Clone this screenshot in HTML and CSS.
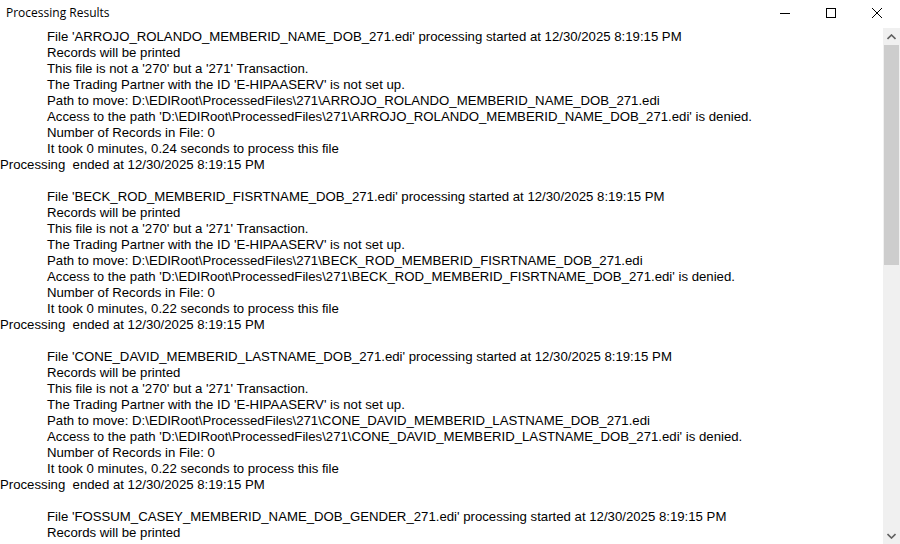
FILE: index.html
```html
<!DOCTYPE html>
<html lang="en">
<head>
    <meta charset="UTF-8">
    <title>Processing Results</title>
    <link rel="stylesheet" href="styles.css">
</head>
<body>

    <div class="window">
        <!-- Title bar -->
        <div class="titlebar">
            <span class="title">Processing Results</span>
            <div class="caption-buttons">
                <span class="cap-btn">
                    <svg width="10" height="10" viewBox="0 0 10 10"><path d="M0 5.5h10" stroke="#000" stroke-width="1"/></svg>
                </span>
                <span class="cap-btn">
                    <svg width="10" height="10" viewBox="0 0 10 10"><rect x="0.5" y="0.5" width="9" height="9" fill="none" stroke="#000" stroke-width="1"/></svg>
                </span>
                <span class="cap-btn">
                    <svg width="10" height="10" viewBox="0 0 10 10"><path d="M0 0L10 10M10 0L0 10" stroke="#000" stroke-width="1"/></svg>
                </span>
            </div>
        </div>

        <!-- Results text box -->
        <div class="content">
            <div class="results" id="results"></div>
            <div class="scrollbar">
                <span class="arrow">
                    <svg width="9" height="6" viewBox="0 0 9 6"><path d="M0.5 5L4.5 1L8.5 5" fill="none" stroke="#606060" stroke-width="1.6"/></svg>
                </span>
                <div class="track">
                    <div class="thumb"></div>
                </div>
                <span class="arrow">
                    <svg width="9" height="6" viewBox="0 0 9 6"><path d="M0.5 1L4.5 5L8.5 1" fill="none" stroke="#606060" stroke-width="1.6"/></svg>
                </span>
            </div>
        </div>
    </div>

    <script>
        (function() {
            const files = [
                { name: 'ARROJO_ROLANDO_MEMBERID_NAME_DOB_271.edi', secs: '0.24' },
                { name: 'BECK_ROD_MEMBERID_FISRTNAME_DOB_271.edi', secs: '0.22' },
                { name: 'CONE_DAVID_MEMBERID_LASTNAME_DOB_271.edi', secs: '0.22' },
                { name: 'FOSSUM_CASEY_MEMBERID_NAME_DOB_GENDER_271.edi', secs: '0.22' }
            ];
            const stamp = '12/30/2025 8:19:15 PM';
            const box = document.getElementById('results');

            function addLine(text, indented) {
                const line = document.createElement('div');
                line.className = indented ? 'line indent' : 'line';
                line.textContent = text || '\u00a0';
                box.appendChild(line);
            }

            files.forEach(f => {
                addLine("File '" + f.name + "' processing started at " + stamp, true);
                addLine('Records will be printed', true);
                addLine("This file is not a '270' but a '271' Transaction.", true);
                addLine("The Trading Partner with the ID 'E-HIPAASERV' is not set up.", true);
                addLine('Path to move: D:\\EDIRoot\\ProcessedFiles\\271\\' + f.name, true);
                addLine("Access to the path 'D:\\EDIRoot\\ProcessedFiles\\271\\" + f.name + "' is denied.", true);
                addLine('Number of Records in File: 0', true);
                addLine('It took 0 minutes, ' + f.secs + ' seconds to process this file', true);
                addLine('Processing  ended at ' + stamp, false);
                addLine('', false);
            });
        })();
    </script>
</body>
</html>
```

FILE: styles.css
```css
/* Reset */
* {
    margin: 0;
    padding: 0;
    box-sizing: border-box;
}

body {
    width: 900px;
    height: 544px;
    overflow: hidden;
    background-color: #fff;
}

.window {
    width: 900px;
    height: 544px;
    display: flex;
    flex-direction: column;
    background-color: #fff;
}

/* Title bar */
.titlebar {
    height: 28px;
    flex-shrink: 0;
    display: flex;
    align-items: flex-start;
    justify-content: space-between;
}

.title {
    font-family: "Open Sans", "Noto Sans", sans-serif;
    font-size: 12px;
    color: #000;
    padding: 4px 0 0 6px;
}

.caption-buttons {
    display: flex;
}

.cap-btn {
    width: 46px;
    height: 25px;
    display: flex;
    align-items: center;
    justify-content: center;
}

/* Text box */
.content {
    flex: 1;
    display: flex;
    min-height: 0;
}

.results {
    flex: 1;
    overflow: hidden;
    padding-top: 1px;
    font-family: "Liberation Sans", Arial, sans-serif;
    font-size: 13.2px;
    line-height: 16px;
    color: #000;
}

.line {
    white-space: pre;
    height: 16px;
}

.line.indent {
    padding-left: 47px;
}

/* Scrollbar */
.scrollbar {
    width: 17px;
    flex-shrink: 0;
    display: flex;
    flex-direction: column;
    background-color: #f0f0f0;
}

.arrow {
    height: 17px;
    display: flex;
    align-items: center;
    justify-content: center;
}

.track {
    flex: 1;
    padding: 0 1px;
}

.thumb {
    height: 220px;
    background-color: #cdcdcd;
}
```
